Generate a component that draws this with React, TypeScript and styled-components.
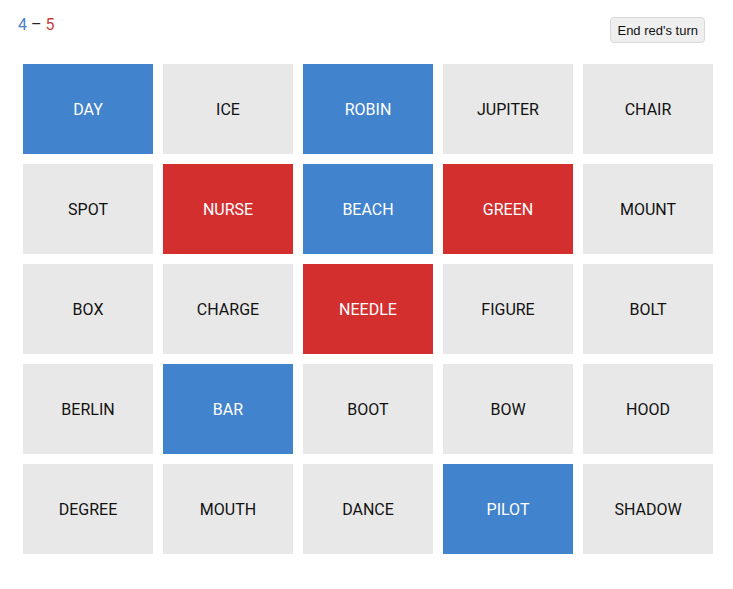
import React from "react";
import styled, { createGlobalStyle } from "styled-components";

const Global = createGlobalStyle`
  html, body { margin: 0; padding: 0; background: #fff; }
  body { font-family: Roboto, "Liberation Sans", sans-serif; }
`;

const Page = styled.div`
  width: 733px;
  height: 589px;
  box-sizing: border-box;
  padding: 16px 0 0 0;
`;

const Header = styled.div`
  display: flex;
  justify-content: space-between;
  align-items: flex-start;
  padding: 0 28px 0 18px;
  height: 48px;
`;

const Score = styled.div`
  font-size: 16px;
  line-height: 18px;
  color: #222;
`;

const Team = styled.span<{ $c: string }>`
  color: ${(p) => p.$c};
`;

const Button = styled.button`
  margin-top: 1px;
  font-family: "Liberation Sans", Arial, sans-serif;
  font-size: 13px;
  color: #111;
  background: #efefef;
  border: 1px solid #d8d8d8;
  border-radius: 4px;
  padding: 0 6px;
  height: 26px;
  cursor: pointer;
`;

const Grid = styled.div`
  margin-left: 23px;
  display: grid;
  grid-template-columns: repeat(5, 130px);
  grid-auto-rows: 90px;
  gap: 10px;
`;

type Kind = "blue" | "red" | "none";

const bg: Record<Kind, string> = {
  blue: "#4183cc",
  red: "#d32f2f",
  none: "#e8e8e8",
};

const Card = styled.div<{ $k: Kind }>`
  background: ${(p) => bg[p.$k]};
  color: ${(p) => (p.$k === "none" ? "#111" : "#fff")};
  display: flex;
  align-items: center;
  justify-content: center;
  font-size: 16px;
`;

const cards: [string, Kind][] = [
  ["DAY", "blue"], ["ICE", "none"], ["ROBIN", "blue"], ["JUPITER", "none"], ["CHAIR", "none"],
  ["SPOT", "none"], ["NURSE", "red"], ["BEACH", "blue"], ["GREEN", "red"], ["MOUNT", "none"],
  ["BOX", "none"], ["CHARGE", "none"], ["NEEDLE", "red"], ["FIGURE", "none"], ["BOLT", "none"],
  ["BERLIN", "none"], ["BAR", "blue"], ["BOOT", "none"], ["BOW", "none"], ["HOOD", "none"],
  ["DEGREE", "none"], ["MOUTH", "none"], ["DANCE", "none"], ["PILOT", "blue"], ["SHADOW", "none"],
];

export default function App() {
  return (
    <Page>
      <Global />
      <Header>
        <Score>
          <Team $c="#4a80c4">4</Team> – <Team $c="#c6413c">5</Team>
        </Score>
        <Button>End red's turn</Button>
      </Header>
      <Grid>
        {cards.map(([w, k]) => (
          <Card key={w} $k={k}>{w}</Card>
        ))}
      </Grid>
    </Page>
  );
}
